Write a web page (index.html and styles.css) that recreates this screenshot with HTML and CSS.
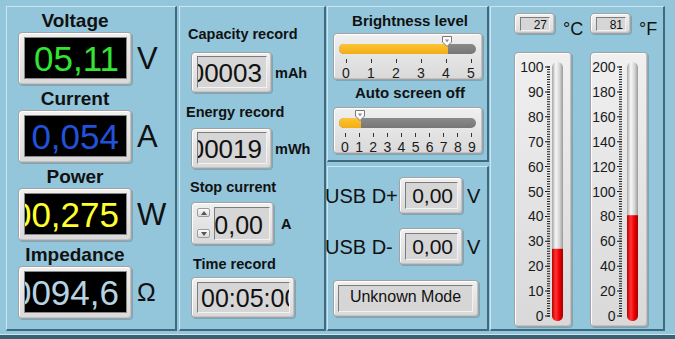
FILE: index.html
```html
<!DOCTYPE html>
<html>
<head>
<meta charset="utf-8">
<link rel="stylesheet" href="styles.css">
</head>
<body>
<div class="app">
  <section class="panel p1">
    <div class="meter">
      <div class="mlabel">Voltage</div>
      <div class="mrow">
        <div class="rframe dframe"><div class="dscreen"><span class="dval green">05,11</span></div></div>
        <div class="unit">V</div>
      </div>
    </div>
    <div class="meter">
      <div class="mlabel">Current</div>
      <div class="mrow">
        <div class="rframe dframe"><div class="dscreen"><span class="dval blue">0,054</span></div></div>
        <div class="unit">A</div>
      </div>
    </div>
    <div class="meter">
      <div class="mlabel">Power</div>
      <div class="mrow">
        <div class="rframe dframe"><div class="dscreen"><span class="dval yellow">00,275</span></div></div>
        <div class="unit">W</div>
      </div>
    </div>
    <div class="meter">
      <div class="mlabel">Impedance</div>
      <div class="mrow">
        <div class="rframe dframe"><div class="dscreen"><span class="dval pale">0094,6</span></div></div>
        <div class="unit ohm">Ω</div>
      </div>
    </div>
  </section>

  <section class="panel p2">
    <div class="flabel l-cap">Capacity record</div>
    <div class="frow r-cap">
      <div class="rframe capframe"><div class="inset gval"><span>00003</span></div></div>
      <span class="funit">mAh</span>
    </div>
    <div class="flabel l-en">Energy record</div>
    <div class="frow r-en">
      <div class="rframe capframe"><div class="inset gval"><span>00019</span></div></div>
      <span class="funit">mWh</span>
    </div>
    <div class="flabel l-stop">Stop current</div>
    <div class="frow r-stop">
      <div class="rframe stopframe">
        <div class="spin">
          <div class="sbtn"><svg width="6" height="4" viewBox="0 0 6 4"><polygon points="0,4 6,4 3,0" fill="#555"/></svg></div>
          <div class="sbtn"><svg width="6" height="4" viewBox="0 0 6 4"><polygon points="0,0 6,0 3,4" fill="#555"/></svg></div>
        </div>
        <div class="inset sval"><span>0,00</span></div>
      </div>
      <span class="funit aunit">A</span>
    </div>
    <div class="flabel l-time">Time record</div>
    <div class="frow r-time">
      <div class="rframe timeframe"><div class="inset tval"><span>00:05:00</span></div></div>
    </div>
  </section>

  <div class="col3">
    <section class="panel p3a">
      <div class="slabel">Brightness level</div>
      <div class="rframe slider">
        <div class="track"><div class="fill" style="width:109px"></div></div>
        <div class="ticks t6">
          <span class="tick">0</span><span class="tick">1</span><span class="tick">2</span><span class="tick">3</span><span class="tick">4</span><span class="tick">5</span>
        </div>
        <div class="thumb" style="left:108px"><svg width="10" height="11" viewBox="0 0 10 11"><polygon points="0.5,0.5 9.5,0.5 9.5,6 5,10.5 0.5,6" fill="#fbfbfb" stroke="#7a7a7a"/><polygon points="3,3.5 7,3.5 5,6.5" fill="#8a8a8a"/></svg></div>
      </div>
      <div class="slabel s2">Auto screen off</div>
      <div class="rframe slider sl2">
        <div class="track"><div class="fill" style="width:22px"></div></div>
        <div class="ticks t10">
          <span class="tick">0</span><span class="tick">1</span><span class="tick">2</span><span class="tick">3</span><span class="tick">4</span><span class="tick">5</span><span class="tick">6</span><span class="tick">7</span><span class="tick">8</span><span class="tick">9</span>
        </div>
        <div class="thumb" style="left:21px"><svg width="10" height="11" viewBox="0 0 10 11"><polygon points="0.5,0.5 9.5,0.5 9.5,6 5,10.5 0.5,6" fill="#fbfbfb" stroke="#7a7a7a"/><polygon points="3,3.5 7,3.5 5,6.5" fill="#8a8a8a"/></svg></div>
      </div>
    </section>
    <section class="panel p3b">
      <div class="usbrow">
        <span class="usblabel">USB D+</span>
        <div class="rframe usbframe"><div class="inset uval"><span>0,00</span></div></div>
        <span class="uunit">V</span>
      </div>
      <div class="usbrow r2">
        <span class="usblabel">USB D-</span>
        <div class="rframe usbframe"><div class="inset uval"><span>0,00</span></div></div>
        <span class="uunit">V</span>
      </div>
      <div class="rframe modeframe"><div class="inset mval">Unknown Mode</div></div>
    </section>
  </div>

  <section class="panel p4">
    <div class="tcol">
      <div class="tboxrow">
        <div class="rframe tempframe"><div class="inset tempval">27</div></div>
        <span class="tunit">°C</span>
      </div>
      <div class="rframe thermo">
        <svg class="tsvg" width="56" height="273" viewBox="0 0 56 273">
          <defs>
            <linearGradient id="glass" x1="0" x2="1" y1="0" y2="0">
              <stop offset="0" stop-color="#a6a6a6"/><stop offset="0.35" stop-color="#f8f8f8"/><stop offset="0.7" stop-color="#d4d4d4"/><stop offset="1" stop-color="#9a9a9a"/>
            </linearGradient>
            <linearGradient id="red" x1="0" x2="1" y1="0" y2="0">
              <stop offset="0" stop-color="#b80000"/><stop offset="0.35" stop-color="#ff3434"/><stop offset="0.65" stop-color="#f00000"/><stop offset="1" stop-color="#a00000"/>
            </linearGradient>
            <clipPath id="tube1"><rect x="37" y="9" width="11" height="259" rx="5.5"/></clipPath>
          </defs>
          <g text-anchor="end">
            <text x="28.5" y="19">100</text><text x="28.5" y="43.9">90</text><text x="28.5" y="68.8">80</text><text x="28.5" y="93.7">70</text><text x="28.5" y="118.6">60</text><text x="28.5" y="143.5">50</text><text x="28.5" y="168.4">40</text><text x="28.5" y="193.3">30</text><text x="28.5" y="218.2">20</text><text x="28.5" y="243.1">10</text><text x="28.5" y="268">0</text>
          </g>
          <line x1="32.5" y1="13.5" x2="32.5" y2="264" stroke="#1a1a1a" stroke-width="5" stroke-dasharray="1 23.9"/>
          <line x1="33.5" y1="13.5" x2="33.5" y2="264" stroke="#1a1a1a" stroke-width="3" stroke-dasharray="1 1.49"/>
          <rect x="37" y="9" width="11" height="259" rx="5.5" fill="url(#glass)"/>
          <rect x="37" y="195.8" width="11" height="73" fill="url(#red)" clip-path="url(#tube1)"/>
        </svg>
      </div>
    </div>
    <div class="tcol">
      <div class="tboxrow">
        <div class="rframe tempframe"><div class="inset tempval">81</div></div>
        <span class="tunit">°F</span>
      </div>
      <div class="rframe thermo">
        <svg class="tsvg" width="56" height="273" viewBox="0 0 56 273">
          <defs>
            <clipPath id="tube2"><rect x="36" y="9" width="11" height="259" rx="5.5"/></clipPath>
          </defs>
          <g text-anchor="end">
            <text x="24.5" y="19">200</text><text x="24.5" y="43.9">180</text><text x="24.5" y="68.8">160</text><text x="24.5" y="93.7">140</text><text x="24.5" y="118.6">120</text><text x="24.5" y="143.5">100</text><text x="24.5" y="168.4">80</text><text x="24.5" y="193.3">60</text><text x="24.5" y="218.2">40</text><text x="24.5" y="243.1">20</text><text x="24.5" y="268">0</text>
          </g>
          <line x1="28.5" y1="13.5" x2="28.5" y2="264" stroke="#1a1a1a" stroke-width="5" stroke-dasharray="1 23.9"/>
          <line x1="29.5" y1="13.5" x2="29.5" y2="264" stroke="#1a1a1a" stroke-width="3" stroke-dasharray="1 1.49"/>
          <rect x="36" y="9" width="11" height="259" rx="5.5" fill="url(#glass)"/>
          <rect x="36" y="162.2" width="11" height="106" fill="url(#red)" clip-path="url(#tube2)"/>
        </svg>
      </div>
    </div>
  </section>
</div>
</body>
</html>
```

FILE: styles.css
```css
* { box-sizing: border-box; }
html, body { margin: 0; padding: 0; }
body {
  width: 675px;
  height: 339px;
  overflow: hidden;
  background: #93c6db;
  font-family: "Liberation Sans", Arial, sans-serif;
  color: #111;
}
.app {
  display: flex;
  align-items: flex-start;
  height: 339px;
  padding: 6px 0 0 6px;
  border-bottom: 4px solid #3b6072;
  box-shadow: inset 0 -1px 0 #cbe6f0;
}
.panel {
  border-style: solid;
  border-width: 1px 2px 2px 1px;
  border-color: #cbe6f0 #3e6a7e #3e6a7e #cbe6f0;
  background: #93c6db;
}

/* raised grey frames */
.rframe {
  background: linear-gradient(#f0f0f0, #d9d9d9);
  border: 1px solid #a2a2a2;
  border-radius: 4px;
  box-shadow: inset 1px 1px 0 #ffffff, inset -1px -1px 0 #c2c2c2, 1px 1px 0 rgba(40, 70, 90, 0.25);
}
.inset {
  background: #d6d6d6;
  border: 1px solid;
  border-color: #7c7c7c #f2f2f2 #f2f2f2 #7c7c7c;
  overflow: hidden;
  white-space: nowrap;
  color: #111;
}

/* panel 1 */
.p1 { width: 171px; height: 325px; margin-right: 2px; padding: 4px 0 0 11px; }
.meter { margin-bottom: 4px; }
.mlabel {
  width: 114px;
  text-align: center;
  font-weight: bold;
  font-size: 19px;
  line-height: 19px;
  margin-bottom: 2px;
}
.mrow { display: flex; align-items: center; gap: 5px; }
.dframe { width: 114px; height: 53px; padding: 4px 4px 5px 5px; }
.dscreen {
  height: 100%;
  background: #000;
  border: 1px solid #8a8a8a;
  display: flex;
  justify-content: flex-end;
  align-items: flex-start;
  overflow: hidden;
  padding: 1px 7px 0 0;
}
.dval {
  flex: none;
  font-size: 35px;
  line-height: 39px;
  white-space: nowrap;
}
.green { color: #33e433; }
.blue { color: #2152dc; }
.yellow { color: #ffff2e; }
.pale { color: #b6d3e2; }
.unit { font-size: 31px; line-height: 31px; color: #111; }
.unit.ohm { font-size: 25px; line-height: 25px; }

/* panel 2 */
.p2 { width: 147px; height: 325px; margin-right: 1px; padding-top: 19px; }
.flabel { font-weight: bold; font-size: 14.5px; line-height: 16px; }
.l-cap { margin-left: 8px; }
.l-en { margin-left: 6px; margin-top: 11px; }
.l-stop { margin-left: 10px; margin-top: 10px; }
.l-time { margin-left: 13px; margin-top: 11px; }
.frow { display: flex; align-items: center; margin-left: 11px; }
.r-cap { margin-top: 10px; }
.r-en { margin-top: 8px; }
.r-stop { margin-top: 7px; }
.r-time { margin-top: 5px; }
.funit { font-weight: bold; font-size: 14.5px; margin-left: 3px; }
.funit.aunit { margin-left: 7px; }
.capframe { width: 81px; height: 41px; padding: 3px 4px 4px 5px; }
.gval {
  height: 100%;
  display: flex;
  justify-content: flex-end;
  align-items: flex-start;
  font-size: 26px;
  line-height: 30px;
  padding: 1px 4px 0 0;
}
.gval span, .sval span, .uval span { flex: none; }
.stopframe { display: flex; width: 83px; height: 43px; padding: 4px 3px 4px 5px; }
.spin {
  display: flex;
  flex-direction: column;
  justify-content: space-between;
  width: 13px;
  height: 33px;
  padding: 1px 0 2px;
  margin-right: 4px;
}
.sbtn {
  height: 9px;
  border: 1px solid #9c9c9c;
  border-radius: 2px;
  background: linear-gradient(#fcfcfc, #dadada);
  display: flex;
  align-items: center;
  justify-content: center;
}
.sbtn svg { display: block; }
.sval {
  flex: 1;
  height: 33px;
  display: flex;
  justify-content: flex-end;
  align-items: flex-start;
  font-size: 25px;
  line-height: 31px;
  padding: 2px 6px 0 0;
}
.timeframe { width: 104px; height: 41px; padding: 4px 4px 4px 5px; }
.tval { height: 100%; font-size: 25px; line-height: 29px; padding: 1px 0 0 3px; }

/* column 3 */
.col3 { display: flex; flex-direction: column; gap: 4px; width: 162px; margin-right: 1px; }
.p3a { height: 156px; padding: 5px 0 0 5px; }
.slabel { text-align: center; font-weight: bold; font-size: 15px; line-height: 17px; }
.slabel.s2 { margin-top: 4px; }
.slider { position: relative; width: 150px; height: 47px; margin-top: 4px; }
.slider.sl2 { margin-top: 6px; }
.track {
  margin: 10px 0 0 5px;
  width: 137px;
  height: 10px;
  border-radius: 5px;
  background: linear-gradient(#8a8a8a, #767676);
  overflow: hidden;
}
.fill { height: 100%; background: linear-gradient(#fcc434, #f3ad16); }
.ticks { display: flex; justify-content: space-between; margin-top: 5px; }
.ticks.t6 { padding: 0 6px 0 7px; }
.ticks.t10 { padding: 0 5px 0 6px; }
.tick {
  width: 10px;
  display: flex;
  flex-direction: column;
  align-items: center;
  font-size: 14px;
  line-height: 12px;
  color: #1a1a1a;
}
.tick::before { content: ""; width: 1px; height: 4px; background: #333; margin-bottom: 4px; }
.thumb { position: absolute; top: 2px; width: 10px; height: 11px; }
.thumb svg { display: block; }

.p3b { height: 165px; padding-top: 10px; }
.usbrow { display: flex; align-items: center; height: 37px; margin-left: -3px; margin-bottom: 14px; }
.usbrow.r2 { margin-bottom: 15px; }
.usblabel { width: 74px; font-size: 20px; line-height: 20px; white-space: nowrap; }
.usbframe { width: 64px; height: 37px; padding: 4px 4px 4px 5px; }
.uval {
  height: 100%;
  display: flex;
  justify-content: flex-end;
  align-items: flex-start;
  font-size: 21px;
  line-height: 25px;
  padding-right: 4px;
}
.uunit { font-size: 20px; line-height: 20px; margin-left: 4px; }
.modeframe { width: 146px; height: 37px; padding: 4px 5px 4px 4px; margin-left: 5px; }
.mval { height: 100%; text-align: center; font-size: 16px; line-height: 21px; }

/* panel 4 */
.p4 { width: 175px; height: 325px; padding: 6px 0 0 23px; display: flex; }
.tcol { width: 76px; flex: none; }
.tboxrow { display: flex; align-items: flex-start; }
.tempframe { width: 41px; height: 21px; padding: 3px 4px 2px 5px; flex: none; }
.tempval { height: 100%; text-align: right; font-size: 12px; line-height: 12px; padding: 1px 2px 0 0; }
.tunit { font-size: 18px; line-height: 18px; margin: 7px 0 0 8px; color: #111; }
.thermo { width: 58px; height: 275px; margin-top: 14px; }
.tsvg { display: block; }
.tsvg text { font-family: "Liberation Sans", Arial, sans-serif; font-size: 14px; fill: #1a1a1a; }
```
